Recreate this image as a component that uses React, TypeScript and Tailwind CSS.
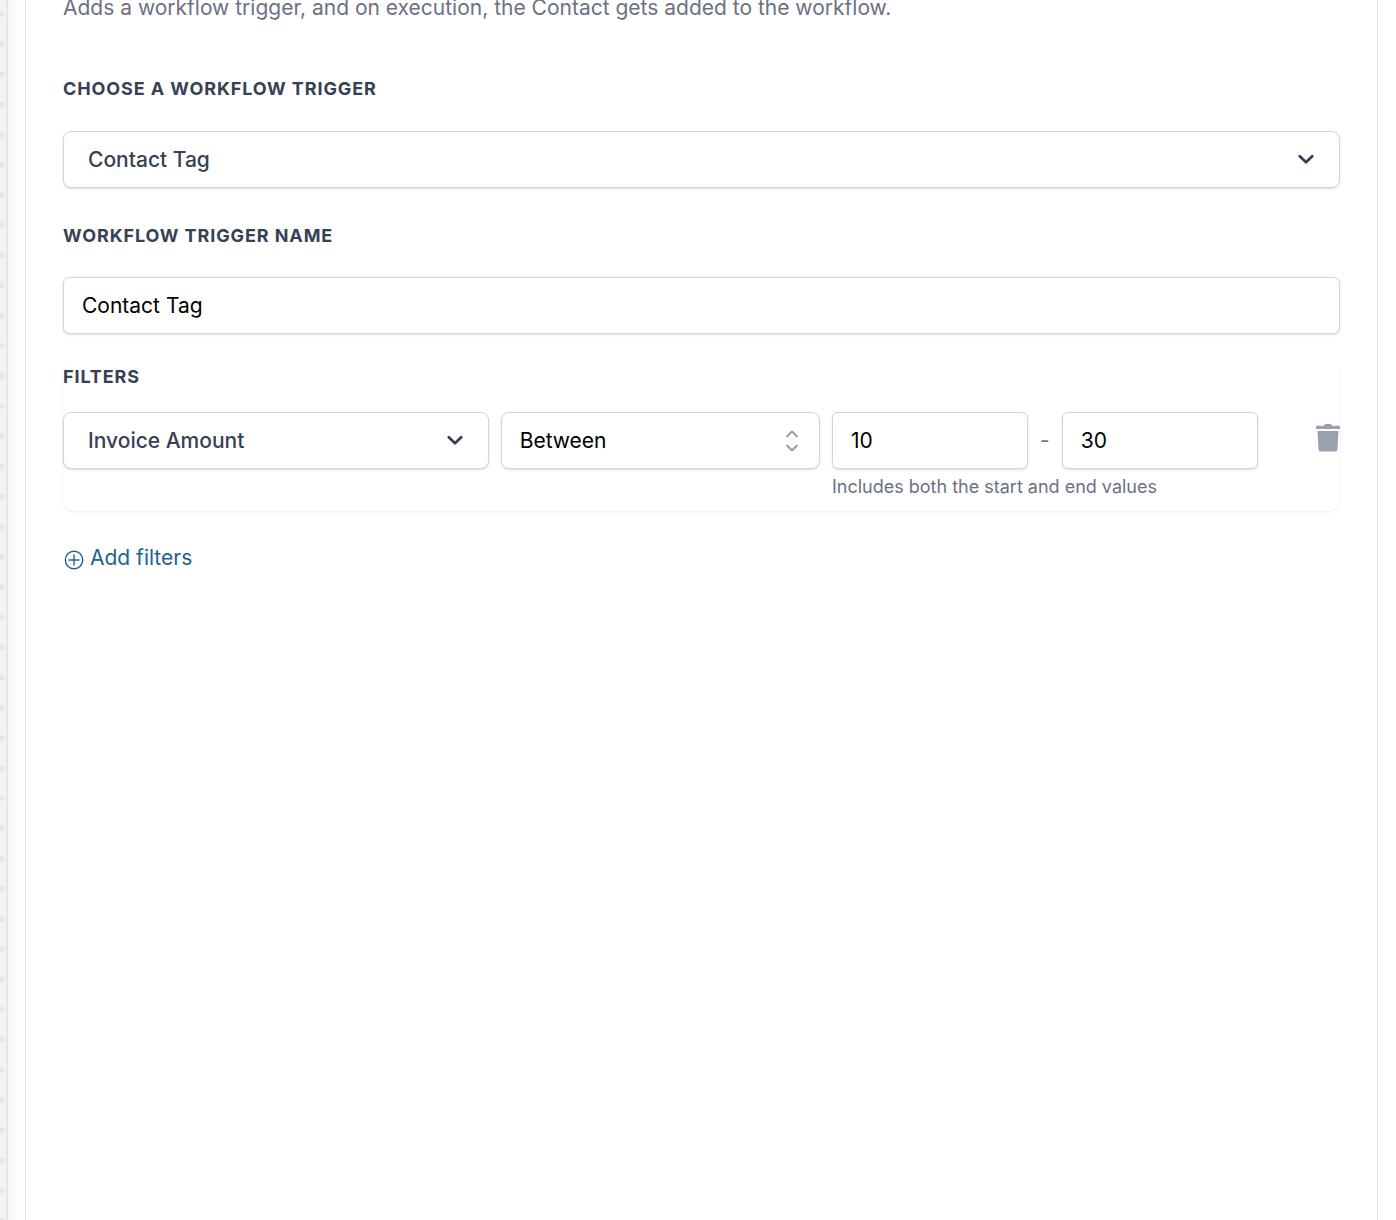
import { useState } from "react";
import type { ReactNode } from "react";

const headingClass =
  "block text-[18px] leading-7 font-bold uppercase tracking-wider text-gray-700";
const fieldClass =
  "block h-[57px] w-full border border-gray-300 bg-white text-[21px] shadow-sm outline-none";

function ChevronDown() {
  return (
    <svg
      className="pointer-events-none absolute inset-y-0 right-6 my-auto size-5 text-gray-700"
      viewBox="0 0 20 20"
      fill="none"
      stroke="currentColor"
      strokeWidth="2.8"
      strokeLinecap="round"
      strokeLinejoin="round"
      aria-hidden="true"
    >
      <path d="M3.800 6.200 10 12.200l6.200-6" />
    </svg>
  );
}

function UpDown() {
  return (
    <svg
      className="pointer-events-none absolute inset-y-0 right-4 my-auto h-6 w-6 text-gray-400"
      viewBox="0 0 24 24"
      fill="none"
      stroke="currentColor"
      strokeWidth="2.1"
      strokeLinecap="round"
      strokeLinejoin="round"
      aria-hidden="true"
    >
      <path d="M7.200 7.300 12 2.600l4.800 4.700M7.200 16.700l4.800 4.700 4.800-4.700" />
    </svg>
  );
}

function TrashIcon() {
  return (
    <svg className="h-7 w-6" viewBox="0 0 24 28" fill="currentColor" aria-hidden="true">
      <path d="M1 1.800h6.800C8.300.6 9 .1 10 .1h4c1 0 1.700.5 2.200 1.700H23c.6 0 1 .4 1 1v2.100H0V2.800c0-.6.4-1 1-1z" />
      <path d="M1.500 7h21l-1 18.500c-.1 1.300-.9 2-2.100 2H4.600c-1.200 0-2-.7-2.100-2z" />
    </svg>
  );
}

function PlusCircle() {
  return (
    <svg
      className="mt-[3px] size-5"
      viewBox="0 0 20 20"
      fill="none"
      stroke="currentColor"
      strokeWidth="1.4"
      strokeLinecap="round"
      aria-hidden="true"
    >
      <circle cx="10" cy="10" r="8.700" />
      <path d="M10 5v10M5 10h10" />
    </svg>
  );
}

function SelectField({
  id,
  label,
  options,
  className,
  icon,
}: {
  id: string;
  label?: string;
  options: string[];
  className: string;
  icon: ReactNode;
}) {
  return (
    <div className="relative">
      <select id={id} aria-label={label} className={`${fieldClass} appearance-none rounded-lg ${className}`}>
        {options.map((option) => (
          <option key={option}>{option}</option>
        ))}
      </select>
      {icon}
    </div>
  );
}

function CanvasEdge() {
  return (
    <div className="relative w-2 shrink-0 overflow-hidden border-r-2 border-[#e4e5ea] bg-[#f2f3f9]">
      <svg className="absolute inset-0 h-full w-full" aria-hidden="true">
        {Array.from({ length: 80 }, (_, i) => (
          <circle key={i} cx="1.500" cy={14 + (i * 181) / 6} r="2.900" fill="#e6e6e8" />
        ))}
      </svg>
    </div>
  );
}

export default function App() {
  const [name, setName] = useState("Contact Tag");
  const [from, setFrom] = useState("10");
  const [to, setTo] = useState("30");

  return (
    <div className="flex min-h-screen overflow-hidden bg-white font-['Inter',sans-serif]">
      <CanvasEdge />
      <div className="flex min-w-0 flex-1 bg-linear-to-r from-[#f6f6f7] to-white to-[12px] pr-[18px] pl-[17px]">
        <main className="min-w-0 flex-1 border-x border-gray-200 bg-white px-[37px]">
          <p className="-mt-1 text-[21px] leading-6 text-gray-500">
            Adds a workflow trigger, and on execution, the Contact gets added to the workflow.
          </p>

          <label htmlFor="trigger" className={`${headingClass} mt-[55px] mb-7`}>
            Choose a workflow trigger
          </label>
          <SelectField
            id="trigger"
            options={["Contact Tag"]}
            className="px-6 font-medium text-gray-700"
            icon={<ChevronDown />}
          />

          <label htmlFor="name" className={`${headingClass} mt-[34px] mb-[27px]`}>
            Workflow trigger name
          </label>
          <input
            id="name"
            value={name}
            onChange={(e) => setName(e.target.value)}
            className={`${fieldClass} rounded-md px-[18px] text-black`}
          />

          <section className="mt-7 rounded-xl pt-px pb-[10px] shadow-[0_1px_3px_rgba(0,0,0,0.08)]">
            <h2 className={`${headingClass} mb-[21px]`}>Filters</h2>
            <div className="flex gap-3">
              <div className="w-1/3">
                <SelectField
                  id="filter-field"
                  label="Filter field"
                  options={["Invoice Amount"]}
                  className="px-6 font-medium text-gray-700"
                  icon={<ChevronDown />}
                />
              </div>
              <div className="w-1/4">
                <SelectField
                  id="filter-operator"
                  label="Filter operator"
                  options={["Between"]}
                  className="px-[18px] text-black"
                  icon={<UpDown />}
                />
              </div>
              <div className="w-1/3">
                <div className="flex items-center">
                  <input
                    aria-label="Start value"
                    value={from}
                    onChange={(e) => setFrom(e.target.value)}
                    className={`${fieldClass} min-w-0 flex-1 rounded-md px-[18px] text-black`}
                  />
                  <span className="w-[34px] text-center text-[21px] text-gray-500">-</span>
                  <input
                    aria-label="End value"
                    value={to}
                    onChange={(e) => setTo(e.target.value)}
                    className={`${fieldClass} min-w-0 flex-1 rounded-md px-[18px] text-black`}
                  />
                </div>
                <p className="mt-1 text-[18px] leading-7 text-gray-500">
                  Includes both the start and end values
                </p>
              </div>
              <button type="button" aria-label="Delete filter" className="mt-3 ml-auto self-start text-gray-400">
                <TrashIcon />
              </button>
            </div>
          </section>

          <button type="button" className="mt-[31px] flex items-center gap-[6px] px-px text-[21px] leading-8 text-[#21638a]">
            <PlusCircle />
            Add filters
          </button>
        </main>
      </div>
    </div>
  );
}
